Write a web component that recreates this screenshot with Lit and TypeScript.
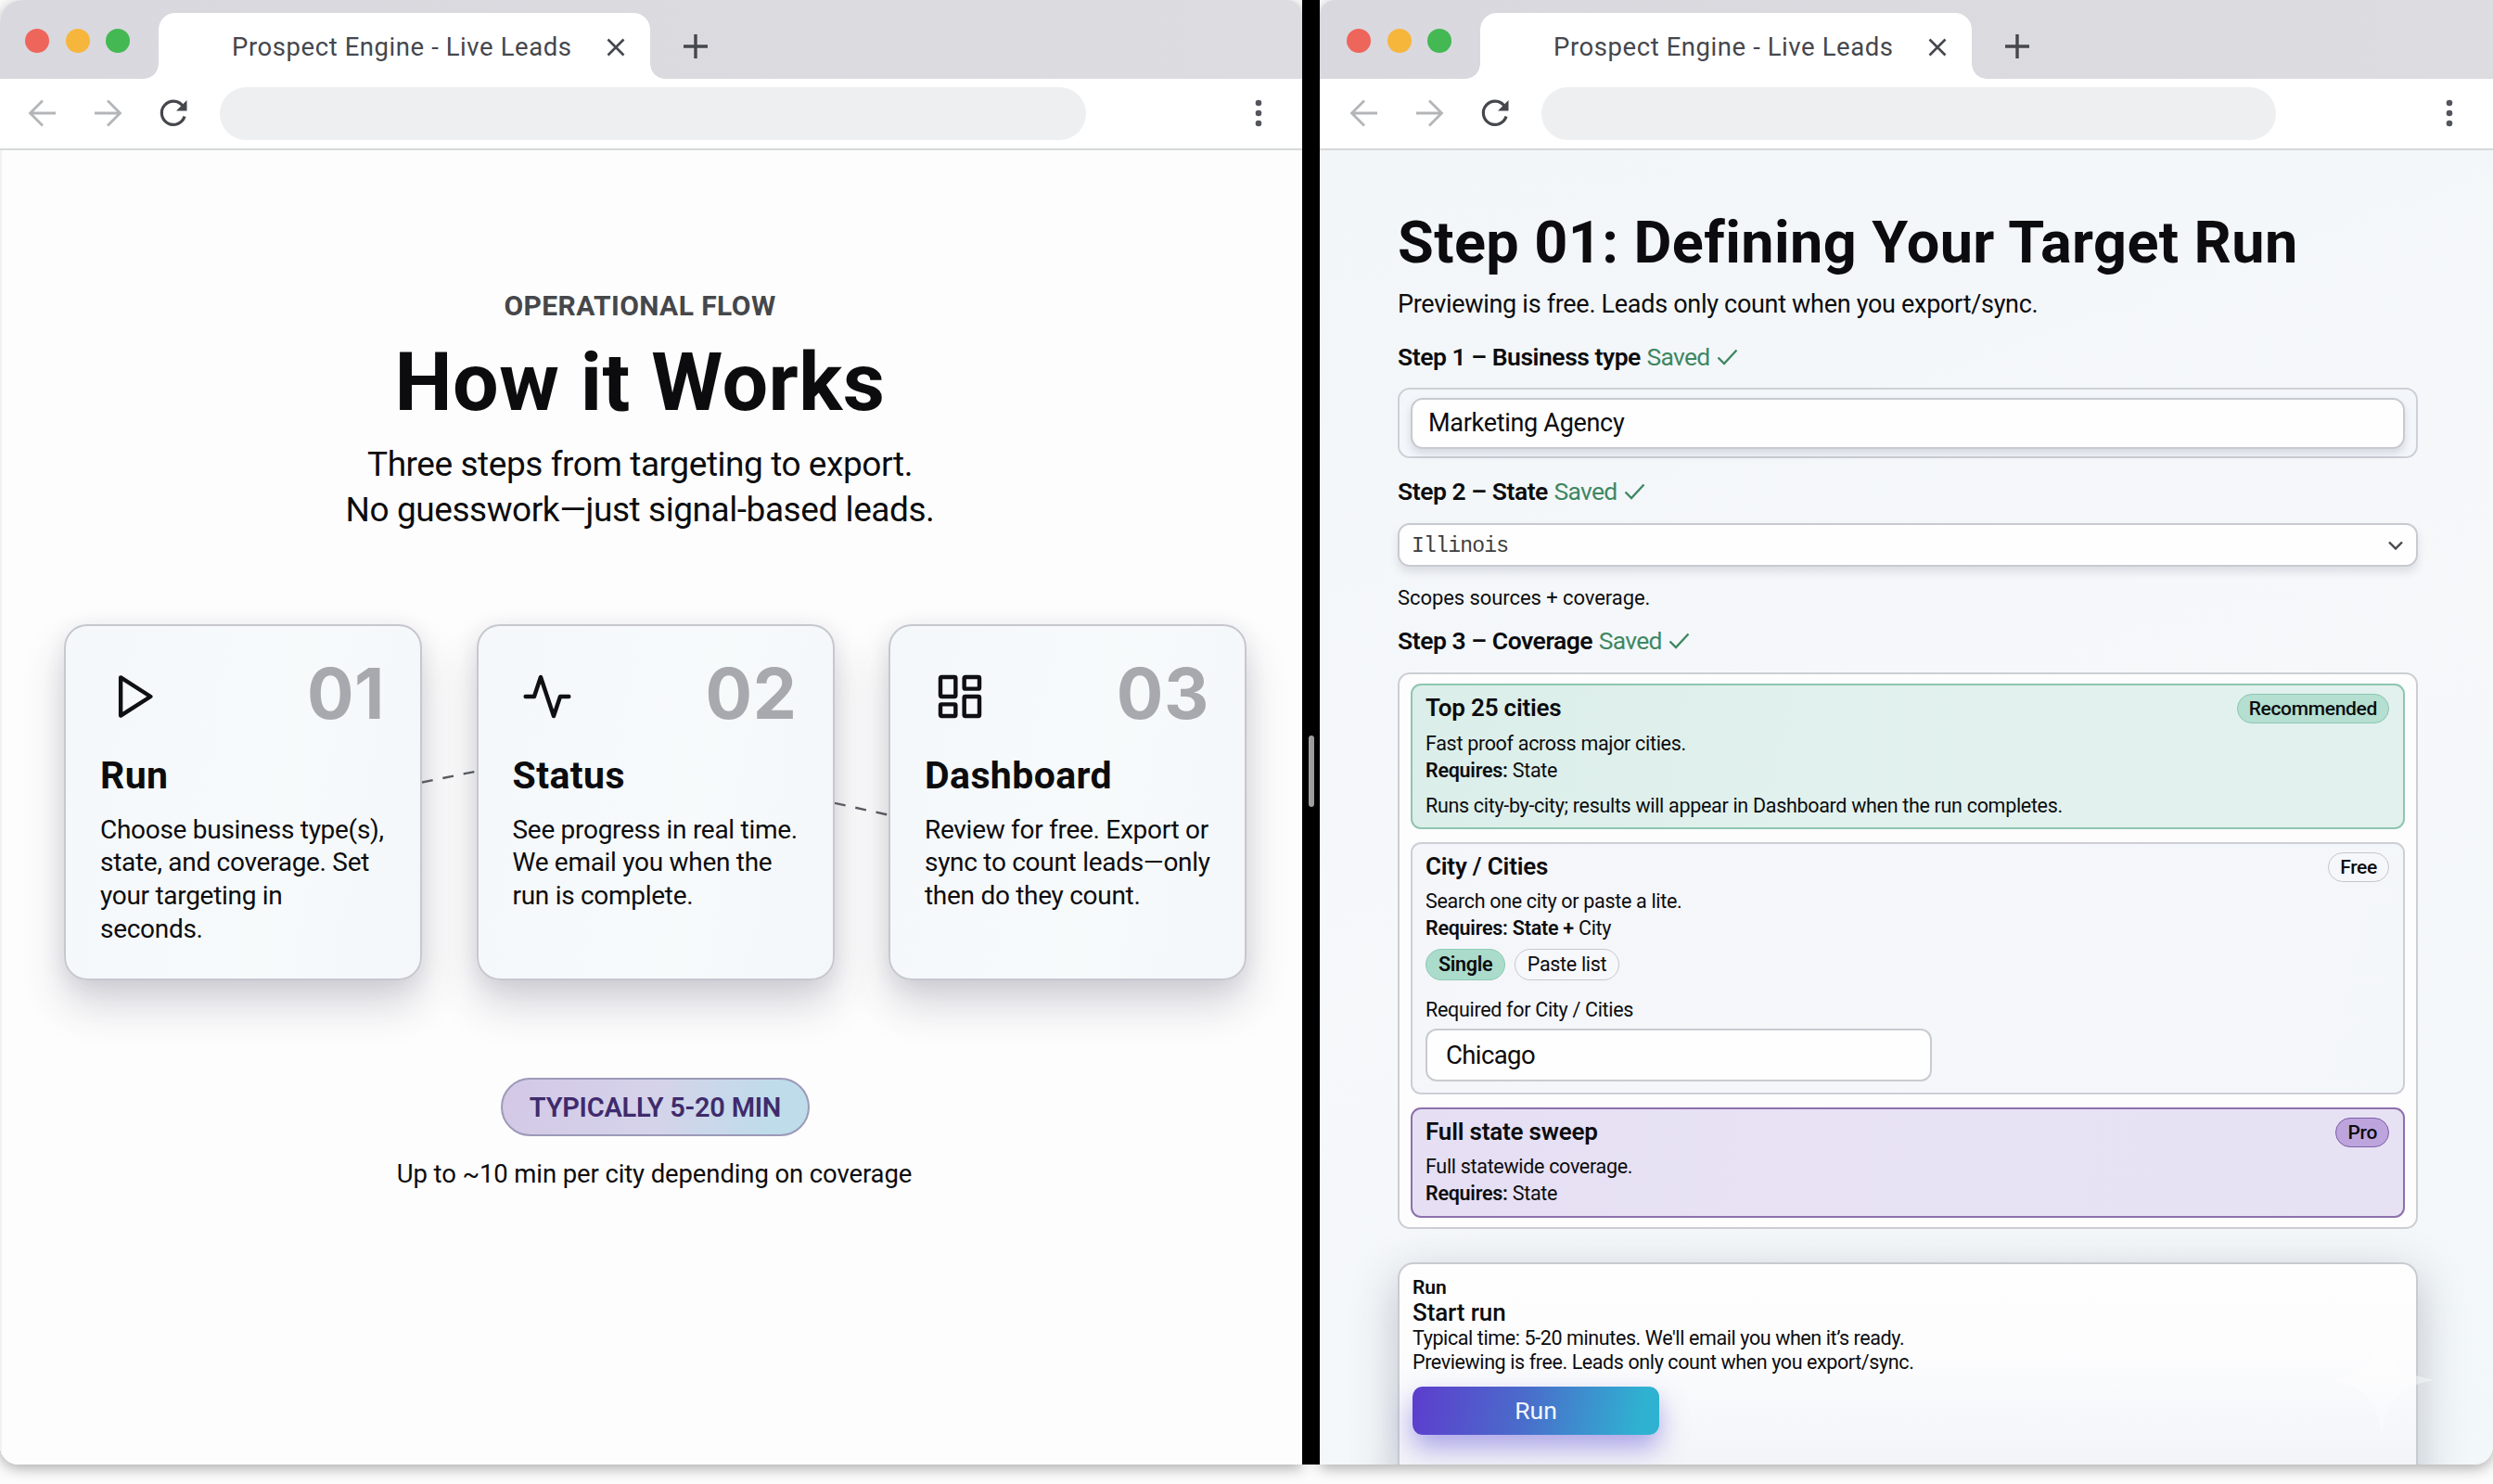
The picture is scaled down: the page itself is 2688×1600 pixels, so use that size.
import { LitElement, html, svg, css, nothing } from 'lit';
import { customElement, property } from 'lit/decorators.js';

const icons: Record<string, unknown> = {
  play: svg`<path d="M5.2 3.2 19 12 5.2 20.8Z" />`,
  activity: svg`<path d="M22 12h-4l-3 9L9 3l-3 9H2" />`,
  dashboard: svg`
    <rect x="3" y="3" width="7" height="9" rx="0.5" />
    <rect x="14" y="3" width="7" height="5.4" rx="0.5" />
    <rect x="14" y="12" width="7" height="9" rx="0.5" />
    <rect x="3" y="15.6" width="7" height="5.4" rx="0.5" />
  `,
};

@customElement('browser-window')
export class BrowserWindow extends LitElement {
  @property()
  heading = '';

  static styles = css`
    :host {
      display: flex;
      flex-direction: column;
      box-sizing: border-box;
      height: 1579px;
      overflow: hidden;
      background: #fdfdfd;
    }
    .strip {
      display: flex;
      flex: none;
      height: 85px;
      padding-left: var(--inset, 0px);
      background: linear-gradient(90deg, #d9d8de, #dddce1);
    }
    .lights {
      display: flex;
      gap: 17.5px;
      width: 144px;
      padding: 31px 0 0 27px;
    }
    .light {
      width: 26px;
      height: 26px;
      border-radius: 50%;
      background: #ee655c;
    }
    .light.min {
      background: #f6b63c;
    }
    .light.max {
      background: #43b853;
    }
    .tab {
      position: relative;
      display: flex;
      align-items: center;
      box-sizing: border-box;
      width: 530px;
      height: 71px;
      margin-top: 14px;
      padding: 2px 26px 0 79px;
      border-radius: 18px 18px 0 0;
      background: #fff;
    }
    /* curved feet on both sides of the tab */
    .tab::before,
    .tab::after {
      content: '';
      position: absolute;
      bottom: 0;
      width: 16px;
      height: 16px;
    }
    .tab::before {
      left: -16px;
      background: radial-gradient(circle at 0 0, transparent 15.5px, #fff 16px);
    }
    .tab::after {
      right: -16px;
      background: radial-gradient(circle at 100% 0, transparent 15.5px, #fff 16px);
    }
    .title {
      flex: 1;
      font: 400 27.5px/34px Roboto, sans-serif;
      letter-spacing: 0.57px;
      color: #45474d;
      white-space: nowrap;
    }
    .new {
      margin: 36px 0 0 35px;
    }
    svg {
      display: block;
      flex: none;
      fill: none;
      stroke: #45474d;
    }
    .bar {
      display: flex;
      flex: none;
      align-items: center;
      box-sizing: border-box;
      height: 77px;
      padding: 0 43px 1px calc(30px + var(--inset, 0px));
      border-bottom: 2px solid #d6d8d9;
      background: #fff;
    }
    .nav {
      stroke: #b3b5b8;
    }
    .forward {
      margin: 0 38px 0 40px;
    }
    .address {
      flex: 1;
      height: 57px;
      margin: 0 calc(182px + var(--inset, 0px) / 2) 0 33px;
      border-radius: 29px;
      background: #eeeff1;
    }
    .menu {
      stroke: none;
      fill: #54565d;
    }
    .page {
      flex: 1;
      min-height: 0;
    }
  `;

  render() {
    return html`
      <div class="strip">
        <div class="lights">
          <div class="light"></div>
          <div class="light min"></div>
          <div class="light max"></div>
        </div>
        <div class="tab">
          <span class="title">${this.heading}</span>
          <svg width="22" height="22" viewBox="0 0 22 22" stroke-width="2.6">
            <path d="M2.5 2.5l17 17M19.5 2.5l-17 17" />
          </svg>
        </div>
        <svg class="new" width="28" height="28" viewBox="0 0 28 28" stroke-width="3.4">
          <path d="M14 1v26M1 14h26" />
        </svg>
      </div>
      <div class="bar">
        <svg class="nav" width="31" height="30" viewBox="0 0 31 30" stroke-width="2.8">
          <path d="M30 15H3M16 1.5 2.5 15 16 28.5" />
        </svg>
        <svg class="nav forward" width="31" height="30" viewBox="0 0 31 30" stroke-width="2.8">
          <path d="M1 15h27M15 1.5 28.5 15 15 28.5" />
        </svg>
        <svg width="34" height="34" viewBox="0 0 34 34" stroke-width="3.2">
          <path d="M29 20.5A12.6 12.6 0 1 1 27 9.2" />
          <path d="M31.5 3v11.5H20Z" fill="#45474d" stroke="none" />
        </svg>
        <div class="address"></div>
        <svg class="menu" width="8" height="30" viewBox="0 0 8 30">
          <circle cx="4" cy="4" r="3.3" />
          <circle cx="4" cy="15" r="3.3" />
          <circle cx="4" cy="26" r="3.3" />
        </svg>
      </div>
      <div class="page"><slot></slot></div>
    `;
  }
}

@customElement('step-card')
export class StepCard extends LitElement {
  @property()
  icon = 'play';

  @property()
  number = '';

  @property()
  heading = '';

  static styles = css`
    :host {
      display: block;
      box-sizing: border-box;
      width: 386px;
      height: 384px;
      padding: 35px 38px 0 37px;
      border: 2px solid #c6c7cf;
      border-radius: 25px;
      background: linear-gradient(100deg, #f4f8fb, #f7fafb 60%, #f4f7fa);
      box-shadow: 0 26px 46px rgba(50, 48, 80, 0.2), 0 4px 22px rgba(50, 48, 80, 0.09);
    }
    .head {
      display: flex;
      justify-content: space-between;
      height: 76px;
    }
    svg {
      display: block;
      width: 56px;
      height: 56px;
      margin: 13px 0 0 9.5px;
      fill: none;
      stroke: #101012;
      stroke-width: 1.9;
      stroke-linecap: round;
      stroke-linejoin: round;
    }
    .number {
      font: 700 75px/76px Inter, sans-serif;
      letter-spacing: 0.6px;
      color: #a8a9af;
    }
    h3 {
      margin: 26px 0 17px;
      font-weight: 700;
      font-size: 41px;
      line-height: 48px;
      letter-spacing: 0.4px;
    }
    p {
      margin: 0;
      font-size: 28px;
      line-height: 35.8px;
      letter-spacing: -0.29px;
      white-space: nowrap;
    }
  `;

  render() {
    return html`
      <div class="head">
        <svg viewBox="0 0 24 24">${icons[this.icon]}</svg>
        <span class="number">${this.number}</span>
      </div>
      <h3>${this.heading}</h3>
      <p><slot></slot></p>
    `;
  }
}

@customElement('coverage-option')
export class CoverageOption extends LitElement {
  @property()
  heading = '';

  @property()
  badge = '';

  @property({ reflect: true })
  tone = 'plain';

  static styles = css`
    :host {
      display: block;
      box-sizing: border-box;
      padding: 8px 15px 0 14px;
      border: 2px solid #cccfd5;
      border-radius: 11px;
      background: linear-gradient(100deg, #f5f6fa, #f4f7fa);
      font-size: 21.5px;
      line-height: 29px;
      letter-spacing: -0.31px;
    }
    :host([tone='green']) {
      border-color: #8fc6b1;
      background: linear-gradient(100deg, #dbeee9, #e1f1ed 40%, #e2f1ed);
    }
    :host([tone='purple']) {
      border-color: #8d70ac;
      background: linear-gradient(100deg, #e6dff4, #e8e3f4 50%, #e7e2f3);
    }
    .head {
      display: flex;
      justify-content: space-between;
      height: 39.5px;
    }
    h4 {
      margin: 0;
      font-weight: 600;
      font-size: 26px;
      line-height: 32px;
      letter-spacing: -0.2px;
    }
    .badge {
      box-sizing: border-box;
      height: 32px;
      margin-top: 1px;
      padding: 0 12px;
      border: 1.5px solid #c4c7cd;
      border-radius: 16px;
      background: #f6f7fa;
      font-weight: 500;
      font-size: 21px;
      line-height: 30px;
    }
    :host([tone='green']) .badge {
      border-color: #8cc7b0;
      background: #b4dfd1;
    }
    :host([tone='purple']) .badge {
      border-color: #7e5fa8;
      background: #bda4dd;
    }
  `;

  render() {
    return html`
      <div class="head">
        <h4>${this.heading}</h4>
        ${this.badge ? html`<span class="badge">${this.badge}</span>` : nothing}
      </div>
      <slot></slot>
    `;
  }
}

@customElement('app-root')
export class AppRoot extends LitElement {
  static styles = css`
    :host {
      display: block;
      width: 2688px;
      height: 1600px;
      overflow: hidden;
      background: #fcfcfc;
      font-family: Roboto, sans-serif;
      color: #0c0c0e;
    }
    h1,
    h2,
    p {
      margin: 0;
    }
    .desktop {
      display: grid;
      grid-template-columns: 1404px 19px 1265px;
      height: 1579px;
    }
    browser-window {
      box-shadow: 0 4px 15px rgba(0, 0, 0, 0.32);
    }
    .left {
      border-radius: 24px 16px 0 20px;
    }
    .right {
      --inset: 2px;
      border-radius: 16px 0 20px 0;
    }
    .divider {
      display: flex;
      align-items: center;
      justify-content: center;
      padding-top: 84px;
      background: #000;
    }
    .handle {
      width: 6px;
      height: 77px;
      border-radius: 3px;
      background: #a3a3a3;
    }

    /* left page */
    .flow {
      display: flex;
      flex-direction: column;
      align-items: center;
      box-sizing: border-box;
      height: 100%;
      padding-left: 7px;
      border-left: 2px solid #f1f1f2;
      background: #fdfdfd;
    }
    .intro {
      margin-right: 33px;
      text-align: center;
    }
    .eyebrow {
      margin-top: 150px;
      font-weight: 700;
      font-size: 30px;
      line-height: 36px;
      letter-spacing: 0.42px;
      color: #46474a;
    }
    .intro h1 {
      margin: 14px 0 14px;
      font-size: 88px;
      line-height: 100px;
      letter-spacing: 0.5px;
    }
    .intro .lead {
      font-size: 37px;
      line-height: 49px;
      letter-spacing: -0.44px;
    }
    .cards {
      display: flex;
      align-items: flex-start;
      margin: 98.5px 0 105.5px;
    }
    .link {
      width: 58.5px;
      height: 80px;
      margin-top: 136px;
      fill: none;
      stroke: #5b5c62;
      stroke-width: 2.4;
      stroke-dasharray: 12 11;
    }
    .time {
      box-sizing: border-box;
      height: 62.5px;
      padding: 0 28.5px;
      border: 2px solid #9c9ab8;
      border-radius: 32px;
      background: linear-gradient(100deg, #d3c8e6, #d5d3ea 50%, #bedcea 88%);
      font-weight: 600;
      font-size: 29px;
      line-height: 60px;
      letter-spacing: -0.24px;
      color: #3f2b6c;
    }
    .note {
      margin: 23.5px 2px 0 0;
      font-size: 27.5px;
      line-height: 36px;
      letter-spacing: -0.12px;
    }

    /* right page */
    .setup {
      box-sizing: border-box;
      height: 100%;
      padding: 62px 81px 0 84px;
      overflow: hidden;
      background: linear-gradient(160deg, #f2f6f9, #f6f8fa 50%, #f2f7f9);
    }
    .setup h1 {
      font-size: 63px;
      line-height: 76px;
      letter-spacing: 0.4px;
      white-space: nowrap;
    }
    .setup .lead {
      margin: 11px 0 23px;
      font-size: 27px;
      line-height: 34px;
      letter-spacing: -0.3px;
    }
    .label {
      display: flex;
      align-items: center;
      font-weight: 600;
      font-size: 26.5px;
      line-height: 34px;
      letter-spacing: -0.47px;
    }
    .saved {
      margin: 0 7.5px 0 6.5px;
      font-weight: 400;
      letter-spacing: -0.7px;
      color: #3f8763;
    }
    .check {
      fill: none;
      stroke: #3f8763;
      stroke-width: 2.4;
    }
    .field {
      box-sizing: border-box;
      height: 76px;
      margin: 16px 0 19px;
      padding: 9px 12px;
      border: 2px solid #cdd0d6;
      border-radius: 13px;
      background: #f3f6fa;
    }
    .value {
      box-sizing: border-box;
      height: 55px;
      padding: 0 17px;
      border: 2px solid #c8cad0;
      border-radius: 13px;
      background: #fefefe;
      box-shadow: 0 5px 9px rgba(50, 55, 85, 0.15);
      font-size: 27px;
      line-height: 51.5px;
      letter-spacing: -0.3px;
    }
    .select {
      display: flex;
      align-items: center;
      justify-content: space-between;
      box-sizing: border-box;
      height: 47.5px;
      margin: 16.5px 0 19.5px;
      padding: 2px 14px 0 13px;
      border: 2px solid #c8cad0;
      border-radius: 13px;
      background: #fefefe;
      box-shadow: 0 6px 10px rgba(50, 55, 85, 0.13);
      font: 400 23px/30px 'Liberation Mono', monospace;
      letter-spacing: -0.75px;
      color: #3c3d41;
    }
    .select span {
      padding-top: 2px;
    }
    .chevron {
      fill: none;
      stroke: #45464a;
      stroke-width: 2.4;
    }
    .hint {
      margin-bottom: 15.5px;
      font-size: 22px;
      line-height: 28px;
      letter-spacing: -0.07px;
    }
    .coverage {
      display: grid;
      grid-template-rows: 156.5px 272px 119px;
      gap: 14.2px;
      box-sizing: border-box;
      height: 599.5px;
      margin-top: 17px;
      padding: 10px 12px 0;
      border: 2px solid #ccced4;
      border-radius: 13px;
      background: #fdfdfd;
    }
    .detail {
      margin-top: 9.5px;
    }
    b {
      font-weight: 600;
      letter-spacing: -0.25px;
    }
    .modes {
      display: flex;
      gap: 9.5px;
      margin: 7.5px 0 16.5px;
    }
    .mode {
      box-sizing: border-box;
      height: 34.6px;
      padding: 0 13px;
      border: 1.5px solid #c6c8ce;
      border-radius: 18px;
      background: #f7f8fb;
      line-height: 31.6px;
    }
    .mode.on {
      border-color: #8ccab4;
      background: #abdccb;
      font-weight: 600;
    }
    .city {
      box-sizing: border-box;
      width: 546px;
      height: 57px;
      margin-top: 6px;
      padding: 0 20px;
      border: 2px solid #c9cbd1;
      border-radius: 12px;
      background: #fefefe;
      font-size: 27.5px;
      line-height: 53px;
      letter-spacing: -0.6px;
    }
    .run {
      box-sizing: border-box;
      height: 260px;
      margin-top: 36.5px;
      padding: 12px 15px 0 14px;
      border: 2px solid #c9cbd1;
      border-radius: 17px;
      background: linear-gradient(180deg, #fefefe, #fdfdfe 35%, #f2f4f8 85%);
      box-shadow: 0 14px 50px rgba(45, 50, 85, 0.27);
      font-size: 21.5px;
      line-height: 25.5px;
      letter-spacing: -0.4px;
    }
    .run .kicker {
      font-weight: 600;
      font-size: 21px;
      line-height: 26px;
      letter-spacing: 0;
    }
    .run h2 {
      margin-bottom: 1px;
      font-weight: 500;
      font-size: 26px;
      line-height: 28px;
      letter-spacing: -0.1px;
    }
    .start {
      display: block;
      width: 266px;
      height: 52px;
      margin-top: 14px;
      padding: 0;
      border: none;
      border-radius: 11px;
      background: linear-gradient(100deg, #5d3dcd, #4a6ccb 45%, #2fb2d1 92%);
      box-shadow: 0 14px 28px rgba(98, 84, 215, 0.5);
      font: 400 26.5px/52px Roboto, sans-serif;
      color: #f4f7ff;
    }
    .sparkle {
      position: absolute;
      left: 2513px;
      top: 1430px;
      fill: #fff;
      opacity: 0.42;
    }
  `;

  private label(text: string) {
    return html`
      <div class="label">
        ${text}<span class="saved">Saved</span>
        <svg class="check" width="23" height="18" viewBox="0 0 23 18"><path d="M1.5 9.5 8 16 21.5 1.5" /></svg>
      </div>
    `;
  }

  render() {
    return html`
      <div class="desktop">
        <browser-window class="left" heading="Prospect Engine - Live Leads">
          <div class="flow">
            <div class="intro">
              <p class="eyebrow">OPERATIONAL FLOW</p>
              <h1>How it Works</h1>
              <p class="lead">Three steps from targeting to export.<br />No guesswork—just signal-based leads.</p>
            </div>
            <div class="cards">
              <step-card icon="play" number="01" heading="Run"
                >Choose business type(s),<br />state, and coverage. Set<br />your targeting in<br />seconds.</step-card
              >
              <svg class="link" viewBox="0 0 59 80"><path d="M0 34.5 59 22.5" /></svg>
              <step-card icon="activity" number="02" heading="Status"
                >See progress in real time.<br />We email you when the<br />run is complete.</step-card
              >
              <svg class="link" viewBox="0 0 59 80"><path d="M0 57 59 70" /></svg>
              <step-card icon="dashboard" number="03" heading="Dashboard"
                >Review for free. Export or<br />sync to count leads—only<br />then do they count.</step-card
              >
            </div>
            <div class="time">TYPICALLY 5-20 MIN</div>
            <p class="note">Up to ~10 min per city depending on coverage</p>
          </div>
        </browser-window>

        <div class="divider"><div class="handle"></div></div>

        <browser-window class="right" heading="Prospect Engine - Live Leads">
          <div class="setup">
            <h1>Step 01: Defining Your Target Run</h1>
            <p class="lead">Previewing is free. Leads only count when you export/sync.</p>

            ${this.label('Step 1 – Business type')}
            <div class="field"><div class="value">Marketing Agency</div></div>

            ${this.label('Step 2 – State')}
            <div class="select">
              <span>Illinois</span>
              <svg class="chevron" width="16" height="10" viewBox="0 0 16 10"><path d="M1 1.5l7 7 7-7" /></svg>
            </div>
            <p class="hint">Scopes sources + coverage.</p>

            ${this.label('Step 3 – Coverage')}
            <div class="coverage">
              <coverage-option tone="green" heading="Top 25 cities" badge="Recommended">
                <div>Fast proof across major cities.</div>
                <div><b>Requires:</b> State</div>
                <div class="detail">Runs city-by-city; results will appear in Dashboard when the run completes.</div>
              </coverage-option>
              <coverage-option heading="City / Cities" badge="Free">
                <div>Search one city or paste a lite.</div>
                <div><b>Requires: State +</b> City</div>
                <div class="modes">
                  <span class="mode on">Single</span>
                  <span class="mode">Paste list</span>
                </div>
                <div>Required for City / Cities</div>
                <div class="city">Chicago</div>
              </coverage-option>
              <coverage-option tone="purple" heading="Full state sweep" badge="Pro">
                <div>Full statewide coverage.</div>
                <div><b>Requires:</b> State</div>
              </coverage-option>
            </div>

            <div class="run">
              <p class="kicker">Run</p>
              <h2>Start run</h2>
              <p>Typical time: 5-20 minutes. We'll email you when it’s ready.</p>
              <p>Previewing is free. Leads only count when you export/sync.</p>
              <button class="start">Run</button>
            </div>
          </div>
        </browser-window>
      </div>
      <svg class="sparkle" width="112" height="116" viewBox="0 0 112 116">
        <path d="M55 0C60 36 76 52 112 58 76 64 60 80 55 116 50 80 36 64 0 58 36 52 50 36 55 0Z" />
      </svg>
    `;
  }
}
